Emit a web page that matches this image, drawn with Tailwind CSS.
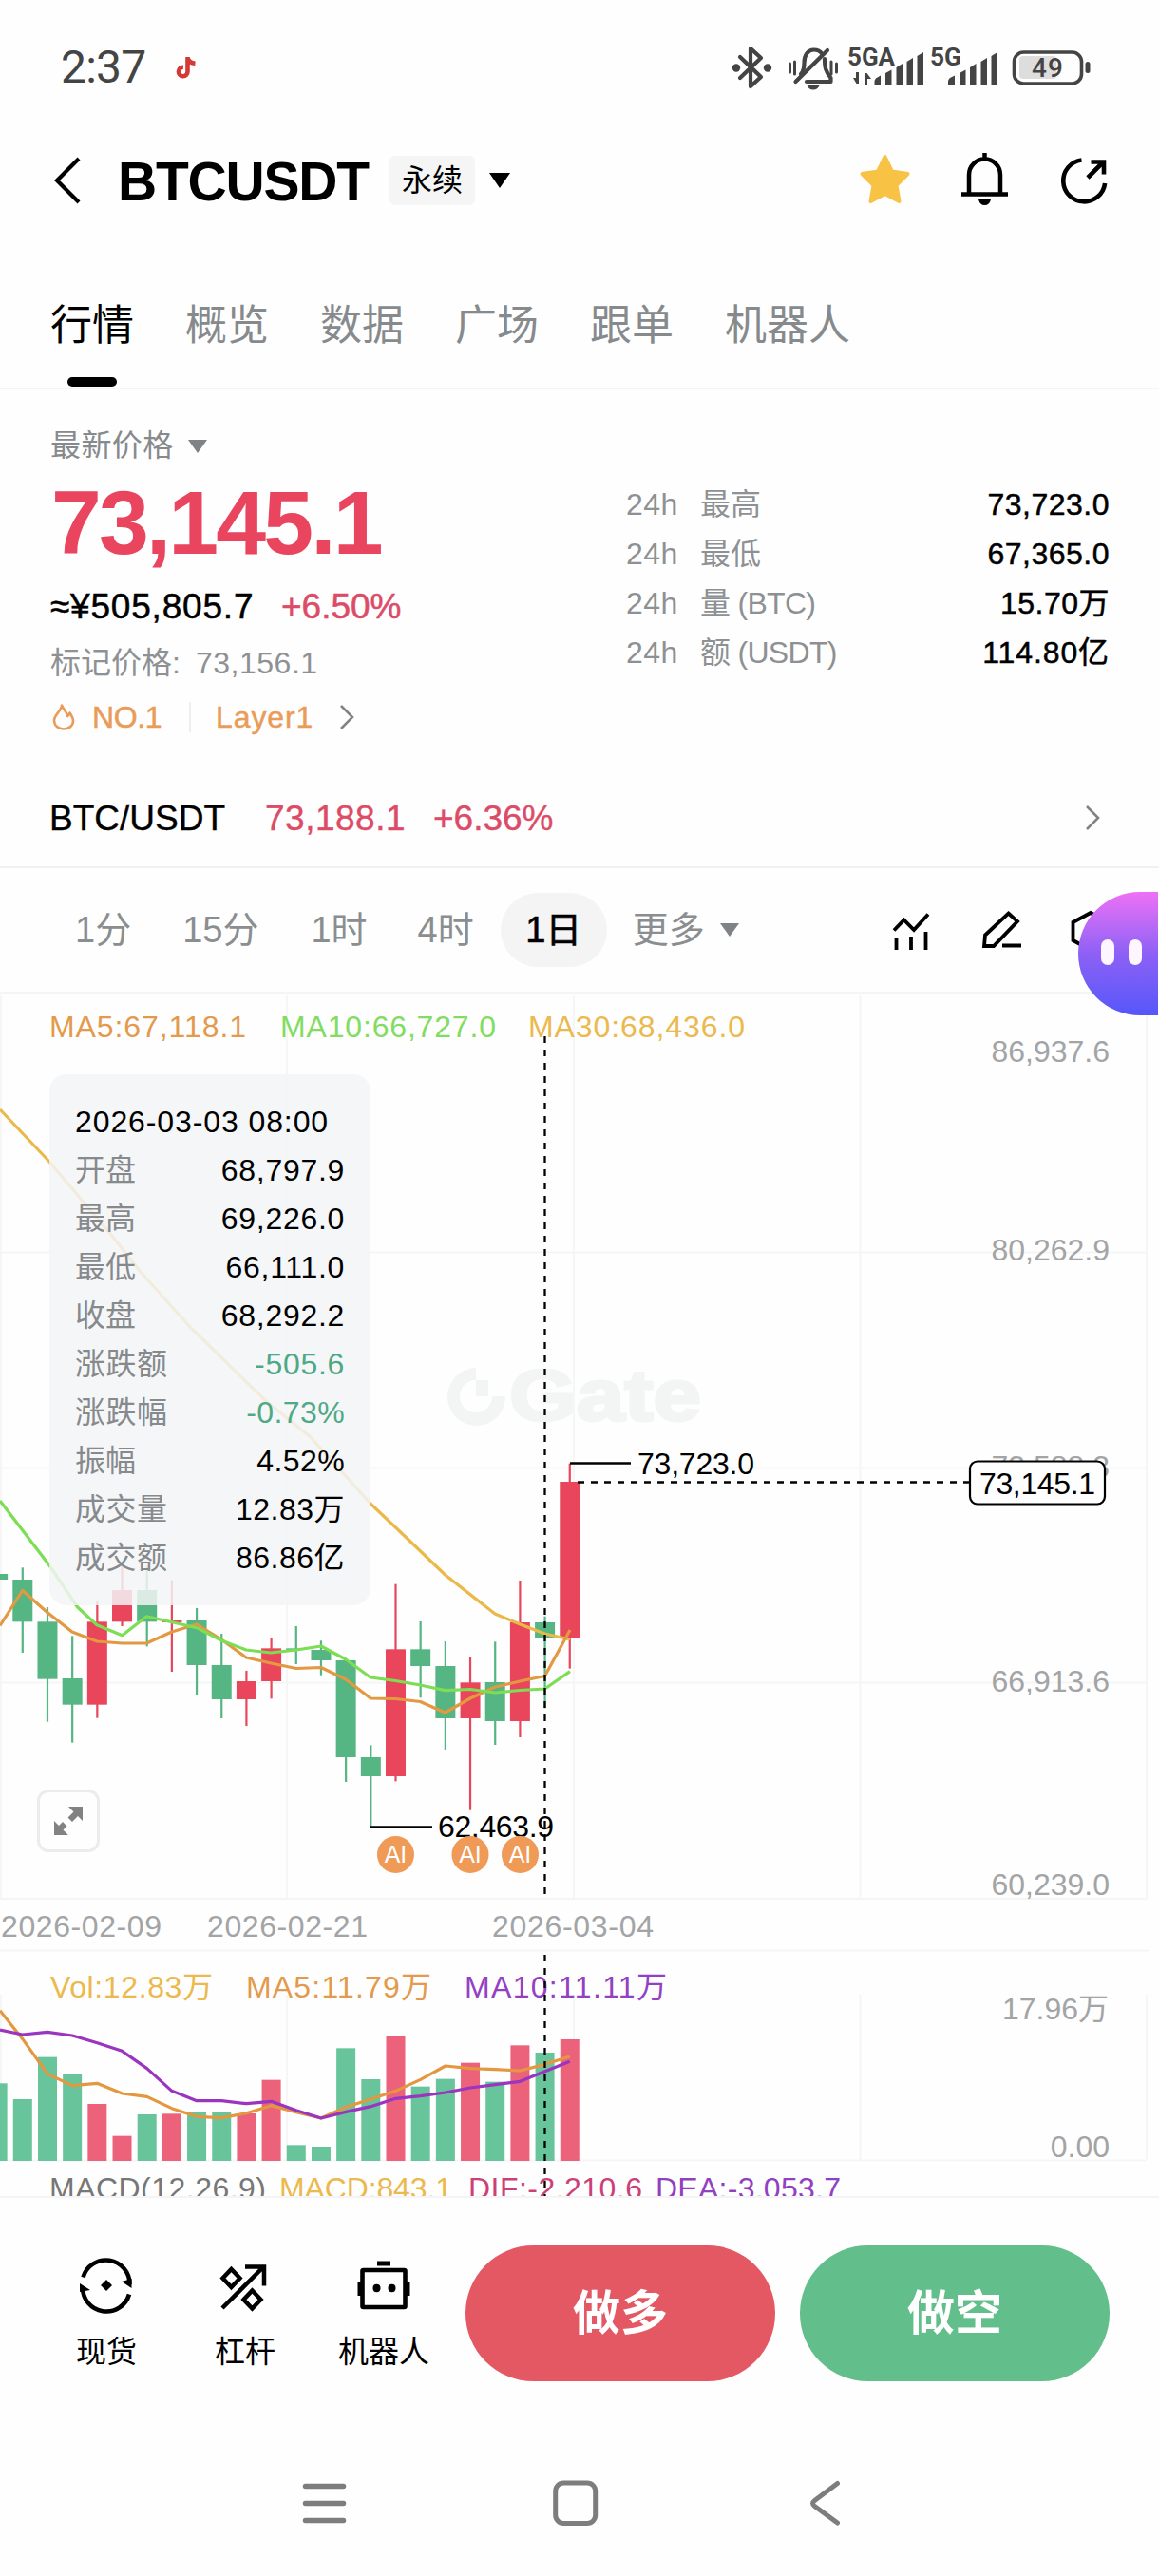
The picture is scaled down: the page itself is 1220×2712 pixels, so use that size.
<!DOCTYPE html>
<html lang="zh-CN">
<head>
<meta charset="utf-8">
<title>BTCUSDT 永续</title>
<script src="https://cdn.jsdelivr.net/npm/@tailwindcss/browser@4"></script>
</head>
<body class="bg-[#fefefe]">
<div class="relative w-[1220px] h-[2712px] overflow-hidden bg-[#fefefe] text-black font-['Liberation_Sans','Noto_Sans_CJK_SC',sans-serif] text-[32px] leading-none whitespace-nowrap">

  <!-- status bar -->
  <div class="flex h-[142px] items-center pl-[64px]">
    <span class="font-['Roboto',sans-serif] text-[48px] text-[#444] w-[90px] tracking-[-0.8px]">2:37</span>
    <svg class="ml-[30px] shrink-0" width="24" height="26" viewBox="184 58 24 26"><path d="M197.500 60v15.500a4.800 4.800 0 1 1-4.500-4.800M197.500 61c1 3.500 3.500 5.500 8 5.800" fill="none" stroke="#d33a35" stroke-width="4.600"/></svg>
    <svg class="ml-[552px] shrink-0" width="400" height="142" viewBox="760 0 400 142">
      <g fill="none" stroke="#444" stroke-width="4.200" stroke-linejoin="round" stroke-linecap="round">
        <path d="M779 60l22 21-11 10V51l11 10-22 21"/>
        <path d="M843 78c3-3 3.500-7 3.500-12 0-8 4-13.500 10-13.500 4 0 7 1.500 8.500 4M868 62c0 9 1 13 6.500 20v4H849"/>
        <path d="M837.500 86L871 53"/>
        <path stroke-width="3" d="M831.500 67v9M836.500 65v13M875 65v13M880.500 67v9"/>
      </g>
      <circle cx="775" cy="71.500" r="4.200" fill="#444"/><circle cx="808" cy="71.500" r="4.200" fill="#444"/>
      <path d="M849.500 90h13q-2 4.500-6.500 4.500t-6.500-4.500z" fill="#444"/>
      <g fill="#444" class="font-['Roboto',sans-serif] font-bold">
        <text x="892" y="69" font-size="25" textLength="50" lengthAdjust="spacingAndGlyphs">5GA</text>
        <text x="979" y="69" font-size="25" textLength="33" lengthAdjust="spacingAndGlyphs">5G</text>
        <path d="M904 76v12h-2.500l-3.500-6h3v-6zM910 89V77h2.500l4.500 6h-4v6z"/>
        <path d="M920.500 86q0-3 3-4.500l3.500-2v9.500h-6.500zM932 77l6.500-3.500V89H932zM943.500 71l6.500-4V89h-6.500zM954.500 65l6.500-4V89h-6.500zM965.500 59l6.500-4V89h-6.500z"/>
        <path d="M998 86q0-3 3-4.500l4-2v9.500h-7zM1010 77l6.500-3.500V89H1010zM1021 71l6.500-4V89h-6.500zM1032.500 65l6.500-4V89h-6.500zM1043.500 59l6.500-4V89h-6.500z"/>
      </g>
      <rect x="1073" y="59" width="39" height="24" rx="4" fill="#ddd"/>
      <rect x="1067.500" y="55" width="71" height="33" rx="10" fill="none" stroke="#444" stroke-width="3.600"/>
      <rect x="1142.500" y="65" width="5" height="12" rx="2.500" fill="#444"/>
      <text x="1086" y="81" font-size="28" textLength="33" fill="#444" class="font-['Roboto',sans-serif] font-medium">49</text>
    </svg>
  </div>

  <!-- title bar -->
  <header class="flex h-[96px] items-center pl-[52px]">
    <svg width="40" height="56" viewBox="52 160 40 56"><path d="M83 165L60 188l23 23" fill="none" stroke="#000" stroke-width="4.200"/></svg>
    <h1 class="ml-[32px] w-[286px] text-[57px] font-bold tracking-[-1.2px] pt-[3px]">BTCUSDT</h1>
    <span class="flex h-[52px] w-[90px] items-center justify-center rounded-[6px] bg-[#f5f5f5]">永续</span>
    <svg class="ml-[15px]" width="22" height="16" viewBox="0 0 22 16"><path d="M0 0h22L11 16z"/></svg>
    <svg class="ml-[363px]" width="64" height="60" viewBox="900 160 64 60"><path d="M931.500 165l7.500 15.500 16.500 2.500-12 12 3 17-15-8-15 8 3-17-12-12 16.500-2.500z" fill="#f8c244" stroke="#f8c244" stroke-width="4" stroke-linejoin="round"/></svg>
    <svg class="ml-[44px]" width="56" height="60" viewBox="1008 160 56 60"><path d="M1020 204v-20a16.500 16.500 0 0 1 33 0v20M1036.500 161v6M1012 204.500h49" fill="none" stroke="#000" stroke-width="4.500"/><path d="M1030 210h13q-1.500 6-6.500 6t-6.500-6z"/></svg>
    <svg class="ml-[48px]" width="56" height="60" viewBox="1112 160 56 60"><g fill="none" stroke="#000" stroke-width="4.600"><path d="M1138.500 168.500a22 22 0 1 0 24.600 24.500M1145 187l17-17M1148.500 170.500h13.500v13"/></g></svg>
  </header>

  <!-- tabs -->
  <nav class="flex h-[172px] gap-[54px] border-b-2 border-[#f4f4f4] pl-[53px] pt-[83px] text-[44px] text-[#878a8d]">
    <div class="flex flex-col items-center gap-[32px] text-black"><span>行情</span><span class="h-[10px] w-[52px] rounded-full bg-black"></span></div>
    <span>概览</span><span>数据</span><span>广场</span><span>跟单</span><span>机器人</span>
  </nav>

  <!-- price summary -->
  <section class="flex h-[400px] justify-between pl-[53px] pr-[52px]">
    <div class="pt-[41px]">
      <div class="flex h-[36px] items-center text-[#878a8d] tracking-[0.4px]">最新价格<svg class="ml-[15px] mt-[2px]" width="20" height="14" viewBox="0 0 20 14"><path d="M0 0h20L10 14z" fill="#808385"/></svg></div>
      <div class="mt-[15px] flex h-[96px] items-center text-[95px] font-bold tracking-[-2.900px] pl-px text-[#ea455f]">73,145.1</div>
      <div class="mt-[20px] flex h-[40px] items-center text-[37px] [-webkit-text-stroke:0.5px]"><span class="w-[243px] tracking-[0.800px]">≈¥505,805.7</span><span class="text-[#dc4c66]">+6.50%</span></div>
      <div class="mt-[22px] flex h-[36px] items-center text-[#8e9194]"><span class="w-[153px]">标记价格:</span><span class="tracking-[0.500px]">73,156.1</span></div>
      <div class="mt-[21px] flex h-[36px] items-center text-[#e99c58] [-webkit-text-stroke:0.5px]">
        <svg width="28" height="32" viewBox="55 738 28 32"><path d="M67 741.500c2 5 5.500 7 6 11.500 1.500-.8 2-2 2.500-3.500 2 3 3.500 5.500 3.500 8.500 0 5-4.500 8.500-10 8.500s-10-3.500-10-9c0-6 7.500-9.500 8-16z" fill="none" stroke="#e99c58" stroke-width="2.600" stroke-linejoin="round"/></svg>
        <span class="ml-[16px] w-[102px] tracking-[-0.400px]">NO.1</span><span class="h-[32px] w-[2px] bg-[#eee]"></span><span class="ml-[26px] w-[128px] tracking-[0.900px]">Layer1</span>
        <svg width="20" height="28" viewBox="0 0 20 28"><path d="M4 2l12 12L4 26" fill="none" stroke="#808385" stroke-width="2.600"/></svg>
      </div>
    </div>
    <dl class="w-[509px] pt-[95px]">
      <div class="flex h-[52px] items-center text-[#8e9194]"><dt class="w-[78px] tracking-[0.500px]">24h</dt><dt>最高</dt><dd class="ml-auto text-black tracking-[0.500px] [-webkit-text-stroke:0.5px]">73,723.0</dd></div>
      <div class="flex h-[52px] items-center text-[#8e9194]"><dt class="w-[78px] tracking-[0.500px]">24h</dt><dt>最低</dt><dd class="ml-auto text-black tracking-[0.500px] [-webkit-text-stroke:0.5px]">67,365.0</dd></div>
      <div class="flex h-[52px] items-center text-[#8e9194]"><dt class="w-[78px] tracking-[0.500px]">24h</dt><dt class="tracking-[-0.700px]">量 (BTC)</dt><dd class="ml-auto text-black tracking-[0.500px] [-webkit-text-stroke:0.5px]">15.70万</dd></div>
      <div class="flex h-[52px] items-center text-[#8e9194]"><dt class="w-[78px] tracking-[0.500px]">24h</dt><dt class="tracking-[-0.700px]">额 (USDT)</dt><dd class="ml-auto text-black tracking-[0.900px] [-webkit-text-stroke:0.5px]">114.80亿</dd></div>
    </dl>
  </section>

  <!-- spot pair -->
  <div class="flex h-[104px] items-center border-b-2 border-[#f1f1f1] pl-[52px] text-[37px] [-webkit-text-stroke:0.4px]">
    <span class="w-[227px]">BTC/USDT</span><span class="w-[177px] tracking-[0.500px] text-[#dc4c66]">73,188.1</span><span class="text-[#dc4c66]">+6.36%</span>
    <svg class="ml-auto mr-[60px]" width="20" height="28" viewBox="0 0 20 28"><path d="M4 2l12 12L4 26" fill="none" stroke="#808385" stroke-width="2.600"/></svg>
  </div>

  <!-- interval bar -->
  <div class="flex h-[132px] items-center border-b-2 border-[#f5f5f5] pl-[79px] text-[38px] text-[#8b8e90]">
    <span>1分</span><span class="ml-[54px]">15分</span><span class="ml-[55px]">1时</span><span class="ml-[53px]">4时</span>
    <span class="ml-[28px] flex h-[78px] w-[112px] items-center justify-center rounded-full bg-[#f4f4f4] text-black [-webkit-text-stroke:0.6px]">1日</span>
    <span class="ml-[27px]">更多</span>
    <svg class="ml-[16px]" width="20" height="14" viewBox="0 0 20 14"><path d="M0 0h20L10 14z" fill="#808385"/></svg>
    <svg class="ml-[157px]" width="48" height="48" viewBox="936 954 48 48"><path d="M942 978.500l10.500-11 10.500 10.500 15-16.500M944.500 987v12M960 985v14M975.500 980v19" fill="none" stroke="#000" stroke-width="3.800"/></svg>
    <svg class="ml-[48px]" width="48" height="48" viewBox="1032 954 48 48"><path d="M1062.500 960.500l9.500 8.500-25 26h-10l1-11.500zM1056 994.500h20" fill="none" stroke="#000" stroke-width="3.800"/></svg>
    <svg class="ml-[48px]" width="48" height="48" viewBox="1128 954 48 48"><path d="M1149 960l18.500 10v19l-18.500 10-18.500-10v-19z" fill="none" stroke="#000" stroke-width="3.800"/></svg>
  </div>

  <!-- chart -->
  <div class="relative h-[1266px]">
    <svg class="block" width="1220" height="1266" viewBox="0 1046 1220 1266" font-size="32">
      <path d="M1 1048V1999M302 1048V1999M604 1048V1999M905.500 1048V1999M1207 1048V1999M0 1318.500H1207M0 1545.500H1207M0 1771.500H1207M0 1999H1207M0 2053.500H1210M0 2274.500H1207M1 2100V2274M302 2100V2274M604 2100V2274M905.500 2100V2274M1207 2100V2274" fill="none" stroke="#f5f5f6" stroke-width="1.800"/>
      <!-- watermark -->
      <path d="M501 1440v13a17 17 0 1 0 17 17h14a30.500 30.500 0 1 1-31-30z" fill="#f3f4f4"/>
      <path d="M501 1453h13v17h-13z" fill="#f3f4f4"/>
      <text x="536" y="1495" font-size="76" textLength="202" lengthAdjust="spacingAndGlyphs" fill="#f3f4f4" stroke="#f3f4f4" stroke-width="3" class="font-bold">Gate</text>

      <g id="candles"></g>
      <g id="volume"></g>
      <g fill="none" stroke-width="3.200" stroke-linejoin="round">
        <path stroke="#ebb94a" d="M0 1168L52 1223 117 1300 147 1338 200 1397 280 1475 327 1513 390 1583 429 1620 468.600 1658 521 1699 547.500 1710 573.500 1720 600 1726"/>
        <path stroke="#e39842" d="M0 1711.500L23.700 1674.500 49.800 1697.500 75.900 1718 102 1728 128.600 1730 154.300 1730 180.800 1718 207 1710 233 1726 259 1745 285.300 1751 311.800 1756.500 338 1755.500 364 1768 390.200 1788 416.300 1788.500 442.400 1791.500 468.600 1803 495 1788 521.200 1776 547.300 1770 573.500 1764.500 600 1716"/>
        <path stroke="#7ddd55" d="M0 1580L30.600 1620 52 1648 81.600 1692 102 1710.700 128.600 1721.700 154.300 1701.700 181 1707.700 207 1713.700 233 1727 259 1737 285 1740 312 1737 338 1733 364 1747 390 1766 416.300 1769.500 442.400 1774 468.600 1779.600 495 1778.500 521.200 1782 547.300 1779.500 573.500 1778 600 1759.600"/>
        <path id="volMa5" stroke="#e3983f"/>
        <path id="volMa10" stroke="#9a35c0"/>
      </g>

      <!-- indicator legends -->
      <text x="52" y="1092" textLength="207" fill="#e39a4c">MA5:67,118.1</text>
      <text x="295" y="1092" textLength="227" fill="#82dc62">MA10:66,727.0</text>
      <text x="556" y="1092" textLength="228" fill="#ebb94e">MA30:68,436.0</text>
      <text x="53" y="2103" textLength="171" fill="#ebb94e">Vol:12.83万</text>
      <text x="259" y="2103" textLength="195" fill="#e39a4c">MA5:11.79万</text>
      <text x="489" y="2103" textLength="213" fill="#9440c4">MA10:11.11万</text>
      <text x="52" y="2315" textLength="228" fill="#777">MACD(12,26,9)</text>
      <text x="294" y="2315" textLength="182" fill="#ebb94e">MACD:843.1</text>
      <text x="493" y="2315" textLength="183" fill="#cc4078">DIF:-2,210.6</text>
      <text x="690" y="2315" textLength="195" fill="#9040c0">DEA:-3,053.7</text>

      <!-- axes -->
      <g fill="#a2a4a6">
        <g text-anchor="end">
          <text x="1168" y="1118">86,937.6</text>
          <text x="1168" y="1327">80,262.9</text>
          <text x="1168" y="1555">73,588.3</text>
          <text x="1168" y="1781">66,913.6</text>
          <text x="1168" y="1995">60,239.0</text>
          <text x="1167" y="2126">17.96万</text>
          <text x="1168" y="2271">0.00</text>
        </g>
        <text x="1" y="2039" textLength="169">2026-02-09</text>
        <text x="218" y="2039" textLength="169">2026-02-21</text>
        <text x="518" y="2039" textLength="170">2026-03-04</text>
      </g>

      <!-- high / low callouts -->
      <path d="M600 1540.500H664M390 1923.500H455" stroke="#000" stroke-width="2.400"/>
      <text x="671" y="1552" textLength="123">73,723.0</text>
      <text x="461" y="1934" textLength="122">62,463.9</text>
      <g fill="#ef9a57"><circle cx="416.500" cy="1952.500" r="19.500"/><circle cx="495" cy="1952.500" r="19.500"/><circle cx="547.500" cy="1952.500" r="19.500"/></g>
      <g fill="#fff" font-size="25" text-anchor="middle"><text x="416.500" y="1961">AI</text><text x="495" y="1961">AI</text><text x="547.500" y="1961">AI</text></g>

      <!-- crosshair and last price -->
      <path d="M573.500 1091V1999M573.500 2058V2312" stroke="#000" stroke-width="2.300" stroke-dasharray="7 7"/>
      <path d="M608 1560.500H1020" stroke="#000" stroke-width="2.300" stroke-dasharray="7 7"/>
      <rect x="1021" y="1538.500" width="142" height="45" rx="8" fill="#fefefe" stroke="#000" stroke-width="2.200"/>
      <text x="1031" y="1573" textLength="122">73,145.1</text>
    </svg>

    <!-- selected candle details -->
    <dl class="absolute left-[52px] top-[85px] h-[559px] w-[338px] rounded-[18px] bg-[#f3f5f6]/85 px-[27px] pt-[27px]">
      <div class="flex h-[48px] items-center pb-[3px] tracking-[0.900px]">2026-03-03 08:00</div>
      <div class="flex h-[51px] items-center justify-between"><dt class="text-[#878a8d]">开盘</dt><dd class="tracking-[0.700px]">68,797.9</dd></div>
      <div class="flex h-[51px] items-center justify-between"><dt class="text-[#878a8d]">最高</dt><dd class="tracking-[0.700px]">69,226.0</dd></div>
      <div class="flex h-[51px] items-center justify-between"><dt class="text-[#878a8d]">最低</dt><dd class="tracking-[0.700px]">66,111.0</dd></div>
      <div class="flex h-[51px] items-center justify-between"><dt class="text-[#878a8d]">收盘</dt><dd class="tracking-[0.700px]">68,292.2</dd></div>
      <div class="flex h-[51px] items-center justify-between"><dt class="text-[#878a8d] tracking-[0.500px]">涨跌额</dt><dd class="tracking-[0.700px] text-[#4fa886]">-505.6</dd></div>
      <div class="flex h-[51px] items-center justify-between"><dt class="text-[#878a8d] tracking-[0.500px]">涨跌幅</dt><dd class="tracking-[0.400px] text-[#4fa886]">-0.73%</dd></div>
      <div class="flex h-[51px] items-center justify-between"><dt class="text-[#878a8d]">振幅</dt><dd class="tracking-[0.400px]">4.52%</dd></div>
      <div class="flex h-[51px] items-center justify-between"><dt class="text-[#878a8d] tracking-[0.500px]">成交量</dt><dd class="tracking-[0.500px]">12.83万</dd></div>
      <div class="flex h-[51px] items-center justify-between"><dt class="text-[#878a8d] tracking-[0.500px]">成交额</dt><dd class="tracking-[0.500px]">86.86亿</dd></div>
    </dl>

    <!-- expand -->
    <div class="absolute left-[39px] top-[838px] flex h-[66px] w-[66px] items-center justify-center rounded-[12px] border-[3px] border-[#ececec] bg-[#fefefe]">
      <svg width="32" height="32" viewBox="0 0 32 32"><path d="M16 1h15v15l-5-5-6 6-4.500-4.500 6-6zM1 31V16l5 5 4-4 4.500 4.500-4 4 5.500 5.500z" fill="#828282"/></svg>
    </div>
  </div>

  <!-- floating assistant -->
  <div class="absolute left-[1135px] top-[939px] flex h-[130px] w-[84px] gap-[15px] rounded-l-[65px] bg-linear-to-b from-[#ee70f6] via-[#8d60f5] to-[#5556fa] pl-[24px] pt-[50px]">
    <span class="h-[27px] w-[14px] rounded-full bg-[#fdf5ff]"></span><span class="h-[27px] w-[14px] rounded-full bg-[#fdf5ff]"></span>
  </div>

  <!-- bottom actions -->
  <footer class="flex h-[195px] border-t-2 border-[#f4f4f4] pl-[39px] pt-[50px]">
    <div class="flex w-[146px] flex-col items-center gap-[23px] pt-[13px]">
      <svg width="60" height="60" viewBox="82 2377 60 60"><g fill="none" stroke="#000" stroke-width="4.600"><path d="M87.500 2397.500a25 25 0 0 1 49 7.500M136 2415.500a25 25 0 0 1-49-7.500"/></g><path d="M128 2402l10.500 7v-10zM95 2411l-11-7v9z"/><path d="M112 2400l6 6-6 6-6-6z"/></svg>
      <span>现货</span>
    </div>
    <div class="flex w-[146px] flex-col items-center gap-[23px] pt-[13px]">
      <svg width="60" height="60" viewBox="228 2377 60 60"><g fill="none" stroke="#000" stroke-width="4.500"><path d="M234 2430l43-43M258 2386.500h20v20M243.500 2389l9 9.500-9 9.500-9-9.500zM265.500 2411.500l9 9.500-9 9.500-9-9.500z"/></g></svg>
      <span>杠杆</span>
    </div>
    <div class="flex w-[146px] flex-col items-center gap-[23px] pt-[13px]">
      <svg width="60" height="60" viewBox="373 2377 60 60"><rect x="380.500" y="2390" width="45" height="39" rx="1" fill="none" stroke="#000" stroke-width="4.600"/><path d="M396 2380.500h14v5h-14zM375.500 2402h4v15h-4zM426.500 2402h4v15h-4z"/><ellipse cx="395.500" cy="2409" rx="4" ry="4.200"/><ellipse cx="411.500" cy="2409" rx="4" ry="4.200"/></svg>
      <span>机器人</span>
    </div>
    <button class="ml-[13px] flex h-[143px] w-[326px] items-center justify-center rounded-full bg-[#e45863] text-[50px] font-bold text-white">做多</button>
    <button class="ml-[26px] flex h-[143px] w-[326px] items-center justify-center rounded-full bg-[#62bf8b] text-[50px] font-bold text-white">做空</button>
  </footer>

  <!-- system navigation -->
  <div class="flex h-[205px] gap-[204px] pl-[311px] pt-[98px]">
    <svg width="60" height="60" viewBox="0 0 60 60"><path d="M10.500 12.500h40M10.500 30.500h40M10.500 48.500h40" stroke="#7d7d7d" stroke-width="5.500" stroke-linecap="round"/></svg>
    <svg width="60" height="60" viewBox="0 0 60 60"><rect x="9.700" y="9" width="42" height="42.500" rx="8.500" fill="none" stroke="#7d7d7d" stroke-width="5"/></svg>
    <svg width="60" height="60" viewBox="0 0 60 60"><path d="M42.500 9.500L18.500 27.500q-4 3 0 6L42.500 51" fill="none" stroke="#7d7d7d" stroke-width="5" stroke-linecap="round"/></svg>
  </div>
</div>

<script>
  const NS = 'http://www.w3.org/2000/svg';
  const xAt = i => 23.8 + 26.18 * i;
  function rect(parent, x, y, w, h, fill) {
    const r = document.createElementNS(NS, 'rect');
    Object.entries({ x, y, width: w, height: h, fill }).forEach(([k, v]) => r.setAttribute(k, v));
    parent.appendChild(r);
  }
  // index, high, body top, body bottom, low (thirds of a pixel below 1620), rising
  const candles = [
    [-1,111,111,129,129,0],[0,91,129,262,360,0],[1,216,262,443,578,0],[2,307,441,524,644,0],[3,197,262,524,566,1],
    [4,85,162,262,276,1],[5,85,162,262,340,0],[6,131,258,264,420,1],[7,219,258,399,492,0],[8,300,399,507,567,0],
    [9,417,450,507,591,1],[10,315,346,450,505,1],[11,276,346,351,396,0],[12,322,351,384,431,0],[13,384,384,690,768,0],
    [14,652,690,750,908,0],[15,143,349,750,766,1],[16,261,349,402,502,0],[17,324,402,567,666,0],[18,373,454,567,857,1],
    [19,325,453,576,651,0],[20,132,264,576,627,1],[21,245,264,315,535,0],[22,-238,-180,315,410,1]
  ];
  const cg = document.getElementById('candles');
  for (const [i, hi, top, bot, lo, up] of candles) {
    const c = up ? '#e9455b' : '#55b583', x = xAt(i);
    rect(cg, x - 1.1, 1620 + hi / 3, 2.2, (lo - hi) / 3, c);
    rect(cg, x - 10.5, 1620 + top / 3, 21, (bot - top) / 3, c);
  }
  const vols = [460,510,377,429,525,626,558,556,549,549,555,449,655,660,349,447,312,470,446,395,455,340,363,321];
  const vg = document.getElementById('volume');
  vols.forEach((v, n) => rect(vg, xAt(n - 1) - 10, 2040 + v / 3, 20, (705 - v) / 3, candles[n][5] ? '#eb627a' : '#67c49b'));
  const line = (id, first, ys) => document.getElementById(id).setAttribute('d',
    `M0 ${2040 + first / 3}` + ys.map((v, i) => `L${xAt(i)} ${2040 + v / 3}`).join(''));
  line('volMa5', 230, [320,430,467,460,492,502,539,565,569,554,530,551,570,535,510,484,448,405,413,416,420,400,375]);
  line('volMa10', 291, [306,298,309,332,358,413,484,515,515,524,517,545,570,550,533,508,500,489,474,464,454,422,391]);
</script>
</body>
</html>
